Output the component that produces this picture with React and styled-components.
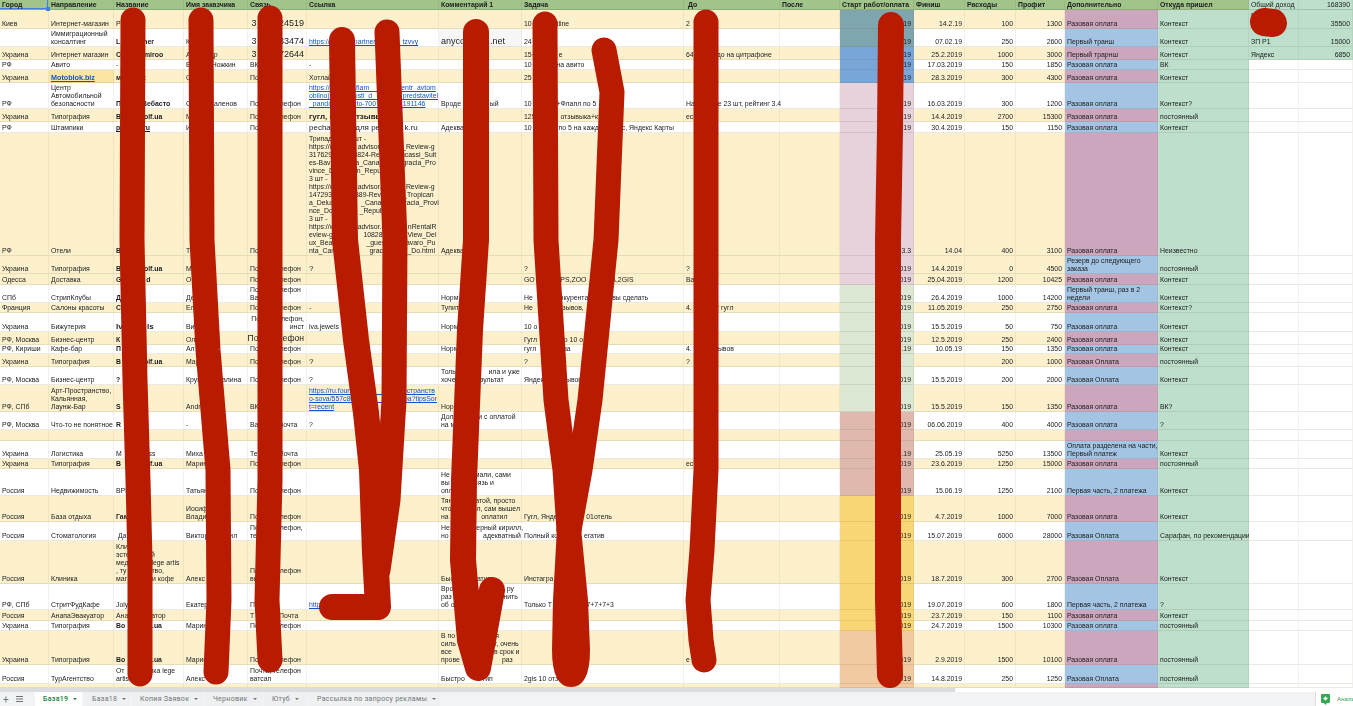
import React from 'react';
import styled, { createGlobalStyle } from 'styled-components';

const GlobalStyle = createGlobalStyle`
  html, body {
    margin: 0;
    padding: 0;
    height: 100%;
    overflow: hidden;
    background: #fff;
  }
  #root {
    height: 100%;
  }
`;

const COLS = '49px 65px 70px 64px 59px 132px 83px 162px 96px 60px 74px 51px 51px 49px 93px 91px 50px 54px';

const CREAM = '#fcf0cd';
const PINK = '#cca6bd';
const BLUE = '#a4c4e4';
const GREEN = '#bddfcc';
const INK = '#b91b00';

const START = {
  teal: '#7fa5ae',
  blue: '#78a6d9',
  pink: '#e6d2dc',
  green: '#dce8d3',
  rose: '#dfb9ae',
  yellow: '#fad776',
  orange: '#f2c9a1',
};

const Page = styled.div`
  position: relative;
  display: flex;
  flex-direction: column;
  width: 1353px;
  height: 706px;
  overflow: hidden;
  font-family: 'Liberation Sans', Arial, sans-serif;
  color: #1c1c1c;
`;

const Sheet = styled.div`
  height: 688px;
  overflow: hidden;
  flex: none;
  filter: blur(0.3px);
`;

const Row = styled.div`
  display: grid;
  grid-template-columns: ${COLS};
  height: ${p => p.$h}px;
  background: ${p => p.$bg || '#fff'};
`;

const Cell = styled.div`
  box-sizing: border-box;
  display: flex;
  flex-direction: column;
  justify-content: flex-end;
  align-items: ${p => (p.$right ? 'flex-end' : 'flex-start')};
  min-width: 0;
  padding: 0 2px;
  background: ${p => p.$bg || 'transparent'};
  border-right: 1px solid rgba(90, 80, 40, 0.08);
  border-bottom: 1px solid rgba(90, 80, 40, 0.12);
  font-size: ${p => p.$size || 6.9}px;
  line-height: ${p => (p.$size ? p.$size + 1 : 8)}px;
  font-weight: ${p => (p.$bold ? 700 : 400)};
  color: ${p => (p.$link ? '#1155cc' : 'inherit')};
  text-decoration: ${p => (p.$link || p.$under ? 'underline' : 'none')};
  text-align: ${p => (p.$right ? 'right' : 'left')};
  white-space: pre;
`;

const HeaderCell = styled(Cell)`
  justify-content: center;
  background: ${p => p.$bg || '#a0c48a'};
  font-weight: ${p => (p.$plain ? 400 : 700)};
  border-bottom: 1px solid rgba(60, 80, 40, 0.2);
`;

const SelectedCell = styled(HeaderCell)`
  position: relative;
  box-shadow: inset 0 -1px 0 #3f7fe6, inset -1px 0 0 #3f7fe6;
  &::after {
    content: '';
    position: absolute;
    right: -2px;
    bottom: -2px;
    width: 4px;
    height: 4px;
    background: #3f7fe6;
  }
`;

const ScrollTrack = styled.div`
  flex: none;
  height: 4px;
  background: #fff;
`;

const ScrollThumb = styled.div`
  width: 955px;
  height: 100%;
  background: #dadce0;
`;

const TabBar = styled.div`
  flex: 1;
  display: flex;
  align-items: stretch;
  background: #f1f3f4;
  font-family: Roboto, 'Liberation Sans', sans-serif;
  font-size: 7px;
  letter-spacing: 0.3px;
  color: #70757a;
  white-space: nowrap;
  min-height: 0;
`;

const TabTools = styled.div`
  width: 35px;
  flex: none;
  display: flex;
  align-items: center;
  gap: 7px;
  padding-left: 3px;
  box-sizing: border-box;
  font-size: 10px;
  letter-spacing: 0;
`;

const Tab = styled.div`
  display: flex;
  align-items: center;
  gap: 5px;
  flex: none;
  box-sizing: border-box;
  width: ${p => p.$w}px;
  margin-right: ${p => p.$gap ?? 2}px;
  padding-left: 8px;
  background: ${p => (p.$active ? '#fff' : '#eef0f1')};
  color: ${p => (p.$active ? '#188038' : '#70757a')};
  font-weight: ${p => (p.$active ? 500 : 400)};
`;

const Caret = styled.span`
  width: 0;
  height: 0;
  border-left: 2px solid transparent;
  border-right: 2px solid transparent;
  border-top: 2.5px solid currentColor;
`;

const Explore = styled.div`
  margin-left: auto;
  width: 38px;
  flex: none;
  display: flex;
  align-items: center;
  gap: 7px;
  padding-left: 5px;
  box-sizing: border-box;
  background: #fff;
  border-left: 1px solid #dadce0;
  font-size: 6.2px;
  letter-spacing: 0;
  color: #46a36a;
`;

const ExploreIcon = styled.svg`
  flex: none;
`;

const Scribble = styled.svg`
  position: absolute;
  left: 0;
  top: 0;
  pointer-events: none;
`;

const Stroke = styled.path`
  fill: none;
  stroke: ${INK};
  stroke-width: ${p => p.$w || 25}px;
  stroke-linecap: round;
  stroke-linejoin: round;
`;

const Blot = styled.path`
  fill: ${INK};
`;

// {n} in a text is the width of n spaces, what was hidden under the marker
const spaced = t => t.replace(/\{(\d+)\}/g, (m, n) => '\u00a0'.repeat(Number(n)));

const HEADERS = [
  'Город', 'Направление', 'Название', 'Имя заказчика', 'Связь', 'Ссылка', 'Комментарий 1', 'Задача',
  ' До', 'После', 'Старт работ/оплата', 'Финиш', 'Расходы', 'Профит', 'Дополнительно', 'Откуда пришел',
];

const b = t => ({ t, bold: true });
const lnk = t => ({ t, link: true });
const big = (t, size = 9) => ({ t, size, right: true });
const CONTACT = 'Почта, телефон';
const ONE = 'Разовая оплата';
const ONE2 = 'Разовая Оплата';
const BOOK = 'В{12}olf.ua';
const EMPTY = Array(16).fill('');

const TRIP = [
  'Трипад{11}шт -',
  'https://w{12}advisor.co{7}_Review-g',
  '317629-{10}3824-Re{11}ucassi_Suit',
  'es-Bav{13}a_Cana_{10}gracia_Pro',
  'vince_D{12}n_Repub',
  '3 шт -',
  'https://w{12}advisor.co{7}_Review-g',
  '147293{12}389-Revie{8}l_Tropican',
  'a_Deluxe{12}_Cana_L{6}gracia_Provi',
  'nce_Do{14}_Republic',
  '3 шт -',
  'https://w{12}advisor.co{10}nRentalR',
  'eview-g3{14}108281{11}View_Del',
  'ux_Beach{14}_guests{8}avaro_Pu',
  'nta_Cana{16}gracia_{8}_Do.html',
].join('\n');

const ROWS = [
  { h: 19, s: 'teal', c: ['Киев', 'Интернет-магазин', 'Р', '', big('3{9}24519'), '', '', '10 {10}otline', '2', '', '1.2.19', '14.2.19', '100', '1300', ONE, 'Контекст'] },
  { h: 18, s: 'teal', c: ['', 'Иммиграционный\nконсалтинг', b('L{12}ner'), 'К', big('3{9}33474'), lnk('https://w{10}partner{14}tzvvy'), { t: 'anyco{10}.net', size: 9, bg: '#f7f7f7' }, '24', '', '', '1.2.2019', '07.02.19', '250', '2600', 'Первый транш', 'Контекст'] },
  { h: 13, s: 'blue', c: ['Украина', 'Интернет магазин', b('С{11} miroo'), 'А{10}др', big('3{9}72644'), '', '', '15+{12}е', '64{12}до на цитрафоне', '', '1.2.2019', '25.2.2019', '1000', '3000', 'Первый трарнш', 'Контекст'] },
  { h: 10, s: 'blue', c: ['РФ', 'Авито', '-', 'В{10} Ножкин', 'ВК', '-', '', '10 {12}на авито', '', '', '1.3.2019', '17.03.2019', '150', '1850', ONE, 'ВК'] },
  { h: 13, s: 'blue', c: ['Украина', { t: 'Motoblok.biz', bold: true, link: true, size: 7.2, bg: '#fbe5a3' }, b('м{11}к'), 'С', 'По', 'Хотлай', '', '25', '', '', '1.3.2019', '28.3.2019', '300', '4300', ONE, 'Контекст'] },
  { h: 26, s: 'pink', c: ['РФ', 'Центр\nАвтомобильной\nбезопасности', b('П{10} Вебасто'), 'С{12}аленов', CONTACT, lnk('https://f{10}k.flam{15}centr_avtom\nobilnoj{11}nosti_d{14}_predstavitel\n_pando{11}sto-700{14}191146'), 'Вроде а{12}ый', '10 {12}+Флапл по 5', 'На{12}е 23 шт, рейтинг 3.4', '', '1.3.2019', '16.03.2019', '300', '1200', ONE, 'Контекст?'] },
  { h: 13, s: 'pink', c: ['Украина', 'Типография', b(BOOK), 'М', CONTACT, { t: 'гугл, к{8}отзывы', size: 8, bold: true }, '', '125 {12}отзывыка+к', 'ес', '', '1.4.2019', '14.4.2019', '2700', '15300', ONE, 'постоянный'] },
  { h: 11, s: 'pink', c: ['РФ', 'Штампики', { t: 'р{12}ru', bold: true, under: true }, 'И', 'По', { t: 'pecha{11}для ре{11}k.ru', size: 8 }, 'Адеква', '10 {13}по 5 на кажд{12}с, Яндекс Карты', '', '', '1.4.2019', '30.4.2019', '150', '1150', ONE, 'Контекст'] },
  { h: 123, s: 'pink', c: ['РФ', 'Отели', b('В'), 'Т', 'По', TRIP, 'Адеква', '', '', '', '13.3', '14.04', '400', '3100', ONE, 'Неизвестно'] },
  { h: 18, s: 'pink', c: ['Украина', 'Типография', b(BOOK), 'М', CONTACT, { t: '?', size: 8 }, '', '?', '?', '', '1.4.2019', '14.4.2019', '0', '4500', 'Резерв до следующего\nзаказа', 'постоянный'], cream: true },
  { h: 11, s: 'pink', c: ['Одесса', 'Доставка', b('G{13}d'), 'О', CONTACT, '', '', 'GO{11}APS,ZOO{13}A,2GIS', 'Ва', '', '1.4.2019', '25.04.2019', '1200', '10425', ONE, 'Контекст'] },
  { h: 18, s: 'green', c: ['СПб', 'СтрипКлубы', b('Д'), 'Де', 'Почта, телефон\nВа', '', 'Норм', 'Не{14}нкурентами{8}вы сделать', '', '', '1.4.2019', '26.4.2019', '1000', '14200', 'Первый транш, раз в 2\nнедели', 'Контекст'] },
  { h: 10, s: 'green', c: ['Франция', 'Салоны красоты', b('С'), 'Ел', CONTACT, '-', 'Тупит', 'Не{12}отзывов,', '4.{13}г гугл', '', '1.5.2019', '11.05.2019', '250', '2750', ONE, 'Контекст?'] },
  { h: 19, s: 'green', c: ['Украина', 'Бижутерия', { t: 'Iv{11}ls', bold: true, size: 8 }, 'Ви', { t: 'Почта, телефон,\nинст', right: true }, 'iva.jewels', 'Норм', '10 о', '', '', '1.5.2019', '15.5.2019', '50', '750', ONE, 'Контекст'] },
  { h: 13, s: 'green', c: ['РФ, Москва', 'Бизнес-центр', b('К'), 'Ол', big('По{8}лефон', 8.6), '', '', 'Гугл{12}по 10 о', '', '', '1.5.2019', '12.5.2019', '250', '2400', ONE, 'Контекст'] },
  { h: 9, s: 'green', c: ['РФ, Кириши', 'Кафе-бар', b('П'), 'Ал', CONTACT, '', 'Норм', 'гугл {11}ова', '4.{12}зывов', '', '4.19', '10.05.19', '150', '1350', ONE, 'Контекст'] },
  { h: 13, s: 'green', c: ['Украина', 'Типография', b(BOOK), 'Мар', CONTACT, { t: '?', size: 8 }, '', '?', '?', '', '', '', '200', '1000', ONE2, 'постоянный'] },
  { h: 18, s: 'green', c: ['РФ, Москва', 'Бизнес-центр', b('?'), 'Круп{11}алина', CONTACT, '?', 'Толь{17}ила и уже\nхоче{9}результат', 'Яндек{10}зывов', '', '', '1.5.2019', '15.5.2019', '200', '2000', ONE2, 'Контекст'] },
  { h: 27, s: 'green', c: ['РФ, СПб', 'Арт-Пространство,\nКальянная,\nЛаунж-Бар', b('S'), 'Andr', 'ВК', lnk('https://ru.fours{26}остранств\nо-sova/557c801{24}ba?tipsSor\nt=recent'), 'Нор', '', '', '', '1.5.2019', '15.5.2019', '150', '1350', ONE, 'ВК?'] },
  { h: 18, s: 'rose', c: ['РФ, Москва', 'Что-то не понятное', b('R'), '-', 'Ва{11}почта', '?', 'Дол{13}и с оплатой\nна м', '', '', '', '1.6.2019', '06.06.2019', '400', '4000', ONE, '?'] },
  { h: 11, s: 'rose', c: EMPTY },
  { h: 18, s: 'rose', c: ['Украина', 'Логистика', 'М{12}ess', 'Миха', 'Те{11}Почта', '', '', '', '', '', '1.5.19', '25.05.19', '5250', '13500', 'Оплата разделена на части,\nПервый платеж', 'Контекст'] },
  { h: 10, s: 'rose', c: ['Украина', 'Типография', b(BOOK), 'Марин', CONTACT, '', '', '', 'ес', '', '1.6.2019', '23.6.2019', '1250', '15000', ONE, 'постоянный'] },
  { h: 27, s: 'rose', c: ['Россия', 'Недвижимость', 'ВРЕ', 'Татьян', CONTACT, '', 'Не{13}мали, сами\nвы{11}связь и\nоплат', '', '', '', '1.6.2019', '15.06.19', '1250', '2100', 'Первая часть, 2 платежа', 'Контекст'] },
  { h: 26, s: 'yellow', c: ['Россия', 'База отдыха', b('Гам'), 'Иосиф\nВладим', CONTACT, '', 'Тян{12}атой, просто\nчто{11}ил, сам вышел\nна {16}оплатил', 'Гугл, Янде{15}01отель', '', '', '1.7.2019', '4.7.2019', '1000', '7000', ONE, 'Контекст'] },
  { h: 19, s: 'yellow', c: ['Россия', 'Стоматология', ' Да', 'Виктор{11}ил', 'Почта, телефон,\nте', '', 'Не{12}верный кирилл,\nно {17}адекватный', 'Полный ком{11}егатив', '', '', '1.7.2019', '15.07.2019', '6000', '28000', ONE2, 'Сарафан, по рекомендации'] },
  { h: 43, s: 'yellow', c: ['Россия', 'Клиника', 'Кли\nэсте{11}й\nмед{12}lege artis\n, ту{13}тво,\nмаг{13}и кофе', 'Алекс', 'Почта, телефон\nвы', '', 'Быс{12}атип', 'Инстагра', '', '', '1.7.2019', '18.7.2019', '300', '2700', ONE2, 'Контекст'] },
  { h: 26, s: 'yellow', c: ['РФ, СПб', 'СтритФудКафе', 'Joly', 'Екатер', 'П', lnk('http'), 'Вро{28}ру\nраз{27}нить\nоб о', 'Только Т{18}7+7+7+3', '', '', '1.7.2019', '19.07.2019', '600', '1800', 'Первая часть, 2 платежа', '?'] },
  { h: 11, s: 'yellow', c: ['Россия', 'АнапаЭвакуатор', 'Ана{12}атор', '', 'Т{13}Почта', '', '', '', '', '', '1.7.2019', '23.7.2019', '150', '1100', ONE, 'Контекст'] },
  { h: 10, s: 'yellow', c: ['Украина', 'Типография', b('Во{14}.ua'), 'Марин', CONTACT, '', '', '', '{12}п', '', '1.7.2019', '24.7.2019', '1500', '10300', ONE, 'постоянный'] },
  { h: 34, s: 'orange', c: ['Украина', 'Типография', b('Во{14}.ua'), 'Марин', CONTACT, '', 'В по{21}я\nсиль{18}ет, очень\nвсе {21}в срок и\nпрове{22}раз', '', 'е', '', '1.9.2019', '2.9.2019', '1500', '10100', ONE, 'постоянный'] },
  { h: 19, s: 'orange', c: ['Россия', 'ТурАгентство', 'От {12}ика lege\nartis', 'Алекс', 'Почта, телефон\nватсап', '', 'Быстро{9}тип', '2gis 10 отз', '', '', '1.8.2019', '14.8.2019', '250', '1250', ONE2, 'постоянный'] },
  { h: 4, s: 'orange', c: EMPTY },
];

const SUMMARY = {
  0: [{ t: 'Р\nо' }, { t: '35500', right: true }],
  1: [{ t: 'ЗП Р1' }, { t: '15000', right: true }],
  2: [{ t: 'Яндекс' }, { t: '6850', right: true }],
};

const SHEETS = [
  { name: 'База18', w: 46 },
  { name: 'Копия Заявок', w: 71 },
  { name: 'Черновик', w: 57 },
  { name: 'Ютуб', w: 44, gap: 1 },
  { name: 'Рассылка по запросу рекламы', w: 131 },
];

const STROKES = [
  { d: 'M133 20 L132 240 L135 380 L138 480 L140 560 L140 674' },
  { d: 'M201 20 L202 240 L208 350 L218 470 L219 600 L216 672' },
  { d: 'M270 18 L270 240 L270 480 L267 600 L270 660' },
  { d: 'M342 40 L345 240 L356 340 L366 413 L372 470 L375 553 L378 607 L332 607', w: 26 },
  { d: 'M387 32 L395 240 L394 400 L388 500 L378 570' },
  { d: 'M476 32 L476 240 L470 330 L464 480 L463 560 L470 640 L478 668 L492 590', w: 26 },
  { d: 'M545 24 L546 240 L556 400 L565 470 L569 530' },
  { d: 'M604 50 L612 92 L606 240 L590 400 L580 470 L569 530' },
  { d: 'M706 22 L706 470 L702 550 L698 600 L701 640 L704 660' },
  { d: 'M891 25 L890 130 L888 240 L888 600 L890 675', w: 26 },
  { d: 'M1264 22 L1273 23', w: 28 },
];

function DataCell({ value, col, extra }) {
  const v = typeof value === 'string' ? { t: value } : value;
  const right = v.right || (col >= 10 && col <= 13);
  return (
    <Cell
      $right={right}
      $bold={v.bold}
      $link={v.link}
      $under={v.under}
      $size={v.size}
      $bg={v.bg || extra}
    >
      {spaced(v.t)}
    </Cell>
  );
}

function SheetRow({ row, index }) {
  const odd = index % 2 === 0;
  const cream = odd || row.cream;
  const side = SUMMARY[index];
  const tint = col => {
    if (col === 10) return START[row.s];
    if (col === 14) return odd ? PINK : BLUE;
    if (col === 15) return GREEN;
    return undefined;
  };
  return (
    <Row $h={row.h} $bg={cream ? CREAM : '#fff'}>
      {row.c.map((value, col) => (
        <DataCell key={col} value={value} col={col} extra={tint(col)} />
      ))}
      {side ? (
        side.map((value, col) => (
          <DataCell key={col} value={value} col={16} extra={GREEN} />
        ))
      ) : (
        <>
          <Cell $bg="#fff" />
          <Cell $bg="#fff" />
        </>
      )}
    </Row>
  );
}

export default function App() {
  return (
    <Page>
      <GlobalStyle />
      <Sheet>
        <Row $h={10}>
          {HEADERS.map((title, col) =>
            col === 0 ? (
              <SelectedCell key={col}>{title}</SelectedCell>
            ) : (
              <HeaderCell key={col}>{title}</HeaderCell>
            )
          )}
          <HeaderCell $bg={GREEN} $plain>Общий доход</HeaderCell>
          <HeaderCell $bg={GREEN} $plain $right>168390</HeaderCell>
        </Row>
        {ROWS.map((row, index) => (
          <SheetRow key={index} row={row} index={index} />
        ))}
      </Sheet>
      <ScrollTrack>
        <ScrollThumb />
      </ScrollTrack>
      <TabBar>
        <TabTools>
          <span>+</span>
          <svg width="7" height="6" viewBox="0 0 7 6">
            <path d="M0 0.5H7M0 3H7M0 5.5H7" stroke="#70757a" strokeWidth="1" />
          </svg>
        </TabTools>
        <Tab $active $w={47}>База19<Caret /></Tab>
        {SHEETS.map(sheet => (
          <Tab key={sheet.name} $w={sheet.w} $gap={sheet.gap}>
            {sheet.name}
            <Caret />
          </Tab>
        ))}
        <Explore>
          <ExploreIcon width="9" height="11" viewBox="0 0 9 11">
            <path d="M1 0H8A1 1 0 0 1 9 1V8A1 1 0 0 1 8 9H6L4.500 11L3 9H1A1 1 0 0 1 0 8V1A1 1 0 0 1 1 0Z" fill="#34a853" />
            <path d="M4.500 2.500V6.500M2.500 4.500H6.500" stroke="#fff" strokeWidth="1.300" />
          </ExploreIcon>
          Анали
        </Explore>
      </TabBar>
      <Scribble width="1353" height="706" viewBox="0 0 1353 706">
        {STROKES.map((stroke, i) => (
          <Stroke key={i} d={stroke.d} $w={stroke.w} />
        ))}
        <Blot d="M557 528 L581 528 L588 600 L590 650 Q590 687 571 687 Q552 687 552 650 L553 600Z" />
      </Scribble>
    </Page>
  );
}
